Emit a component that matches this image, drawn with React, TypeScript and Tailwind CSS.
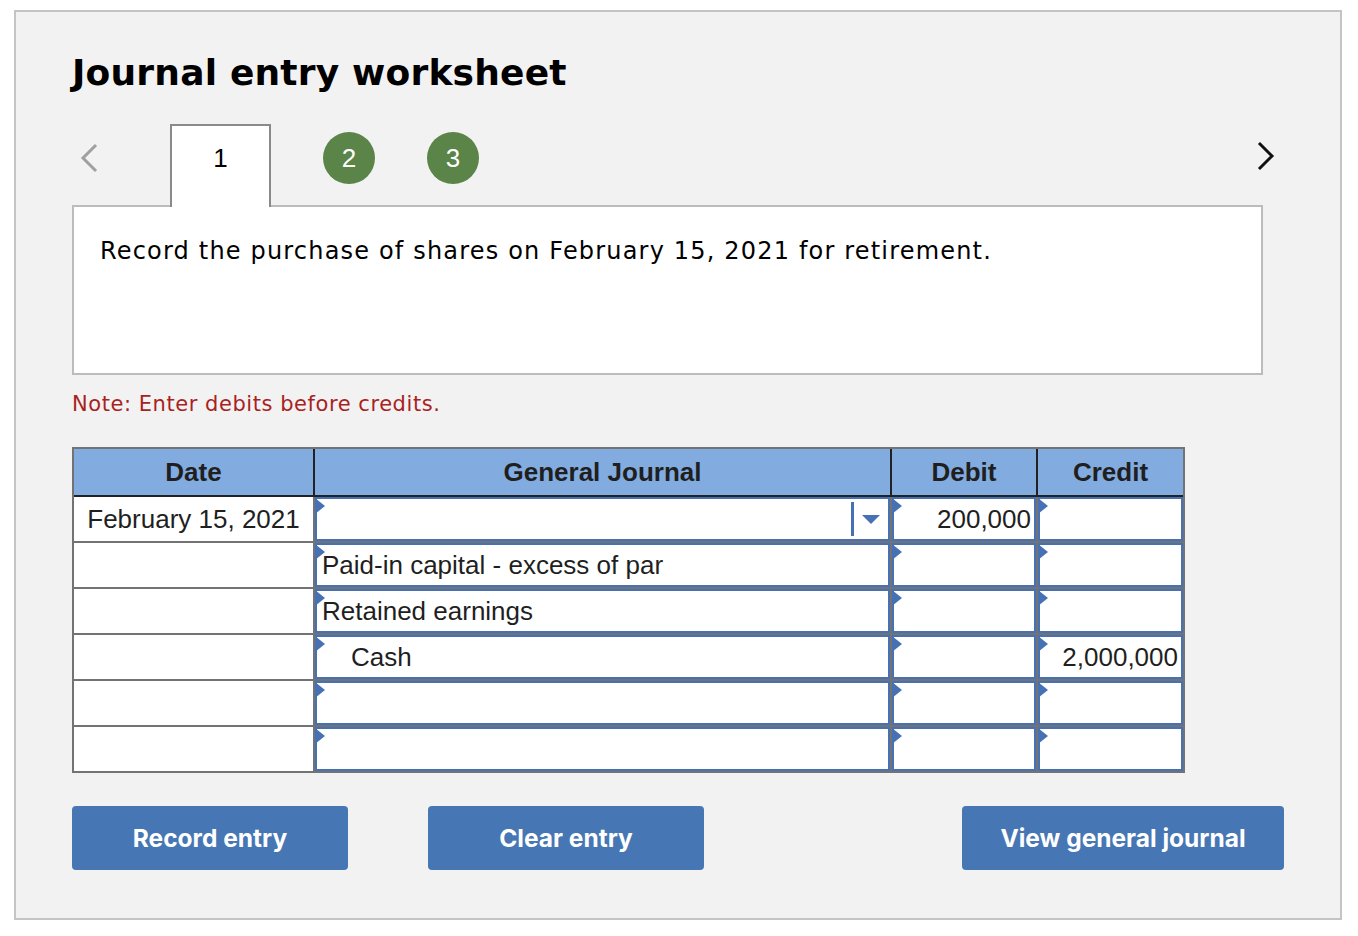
import React from "react";

const BLUE = "border-[#4672b5]";

function Flag() {
  return (
    <div className="absolute -left-[2px] -top-[1px] h-0 w-0 border-y-[8px] border-l-[10px] border-y-transparent border-l-[#4672b5]" />
  );
}

function InputCell({
  text,
  align = "left",
  indent = false,
  dropdown = false,
}: {
  text?: string;
  align?: "left" | "right";
  indent?: boolean;
  dropdown?: boolean;
}) {
  return (
    <div className={`relative flex h-full items-center border-2 ${BLUE} bg-white`}>
      <Flag />
      <div
        className={`flex-1 whitespace-nowrap ${align === "right" ? "pr-[3px] text-right" : indent ? "pl-[34px]" : "pl-[5px]"}`}
      >
        {text}
      </div>
      {dropdown && (
        <>
          <div className="h-[34px] w-[3px] bg-[#4672b5]" />
          <div className="flex w-[34px] items-center justify-center">
            <div className="h-0 w-0 border-x-[9px] border-t-[9px] border-x-transparent border-t-[#4672b5]" />
          </div>
        </>
      )}
    </div>
  );
}

type Row = { date?: string; gj?: string; indent?: boolean; debit?: string; credit?: string; dropdown?: boolean };

const rows: Row[] = [
  { date: "February 15, 2021", gj: "", debit: "200,000", dropdown: true },
  { gj: "Paid-in capital - excess of par" },
  { gj: "Retained earnings" },
  { gj: "Cash", indent: true, credit: "2,000,000" },
  {},
  {},
];

export default function App() {
  return (
    <div className="min-h-[936px] bg-white pt-[10px] pl-[14px]">
      <div className="h-[910px] w-[1328px] border-2 border-[#c4c4c4] bg-[#f2f2f2] pl-[56px] pt-[40px]">
        <h1 className="font-['DejaVu_Sans',Verdana,sans-serif] text-[36px] font-bold leading-[42px] tracking-[0.2px] text-black">
          Journal entry worksheet
        </h1>

        {/* tabs row */}
        <div className="mt-[30px] flex h-[81px] w-[1212px] items-start">
          <div className="flex h-[68px] w-[98px] items-center pl-[6px]">
            <svg width="22" height="32" viewBox="0 0 22 32">
              <path d="M18 3 L5 16 L18 29" fill="none" stroke="#a0a0a0" strokeWidth="3" />
            </svg>
          </div>
          <div className="relative z-10 flex h-[83px] w-[101px] items-start justify-center border-2 border-b-0 border-[#8a8a8a] bg-white pt-[13px] font-['Liberation_Sans',Arial,sans-serif] text-[26px] text-black">
            1
          </div>
          <div className="ml-[52px] mt-[8px] flex h-[52px] w-[52px] items-center justify-center rounded-full bg-[#5a8448] font-['Liberation_Sans',Arial,sans-serif] text-[26px] text-white">
            2
          </div>
          <div className="ml-[52px] mt-[8px] flex h-[52px] w-[52px] items-center justify-center rounded-full bg-[#5a8448] font-['Liberation_Sans',Arial,sans-serif] text-[26px] text-white">
            3
          </div>
          <div className="ml-auto mr-[7px] flex h-[64px] items-center">
            <svg width="22" height="32" viewBox="0 0 22 32">
              <path d="M4 3 L17 16 L4 29" fill="none" stroke="#111" strokeWidth="3" />
            </svg>
          </div>
        </div>

        {/* question box */}
        <div className="h-[170px] w-[1191px] border-2 border-[#bcbcbc] bg-white pl-[26px] pt-[29px] font-['DejaVu_Sans',Verdana,sans-serif] text-[24px] leading-[30px] tracking-[1.18px] text-black">
          Record the purchase of shares on February 15, 2021 for retirement.
        </div>

        <div className="mt-[17px] font-['DejaVu_Sans',Verdana,sans-serif] text-[21px] leading-[24px] tracking-[0.55px] text-[#a8221e]">
          Note: Enter debits before credits.
        </div>

        {/* table */}
        <div className="mt-[31px] w-[1113px] border-2 border-[#737373] font-['Liberation_Sans',Arial,sans-serif] text-[26px] text-[#1f1f1f]">
          <div className="flex h-[48px] border-b-2 border-[#222] bg-[#82abdf] font-bold">
            <div className="flex w-[241px] items-center justify-center border-r-2 border-[#222]">Date</div>
            <div className="flex w-[577px] items-center justify-center border-r-2 border-[#222]">General Journal</div>
            <div className="flex w-[146px] items-center justify-center border-r-2 border-[#222]">Debit</div>
            <div className="flex w-[145px] items-center justify-center">Credit</div>
          </div>
          {rows.map((r, i) => (
            <div
              key={i}
              className={`flex ${i < rows.length - 1 ? "h-[46px] border-b-2 border-[#737373]" : "h-[44px]"}`}
            >
              <div className="flex w-[241px] items-center justify-center border-r-2 border-[#737373] bg-white">
                {r.date}
              </div>
              <div className="w-[577px] border-r-2 border-[#737373]">
                <InputCell text={r.gj} indent={r.indent} dropdown={r.dropdown} />
              </div>
              <div className="w-[146px] border-r-2 border-[#737373]">
                <InputCell text={r.debit} align="right" />
              </div>
              <div className="w-[145px]">
                <InputCell text={r.credit} align="right" />
              </div>
            </div>
          ))}
        </div>

        {/* buttons */}
        <div className="mt-[33px] flex w-[1212px] font-['Inter',sans-serif] text-[24.5px] font-bold text-white">
          <button className="flex h-[64px] w-[276px] items-center justify-center rounded-[4px] bg-[#4676b3]">
            Record entry
          </button>
          <button className="ml-[80px] flex h-[64px] w-[276px] items-center justify-center rounded-[4px] bg-[#4676b3]">
            Clear entry
          </button>
          <button className="ml-auto flex h-[64px] w-[322px] items-center justify-center rounded-[4px] bg-[#4676b3]">
            View general journal
          </button>
        </div>
      </div>
    </div>
  );
}
